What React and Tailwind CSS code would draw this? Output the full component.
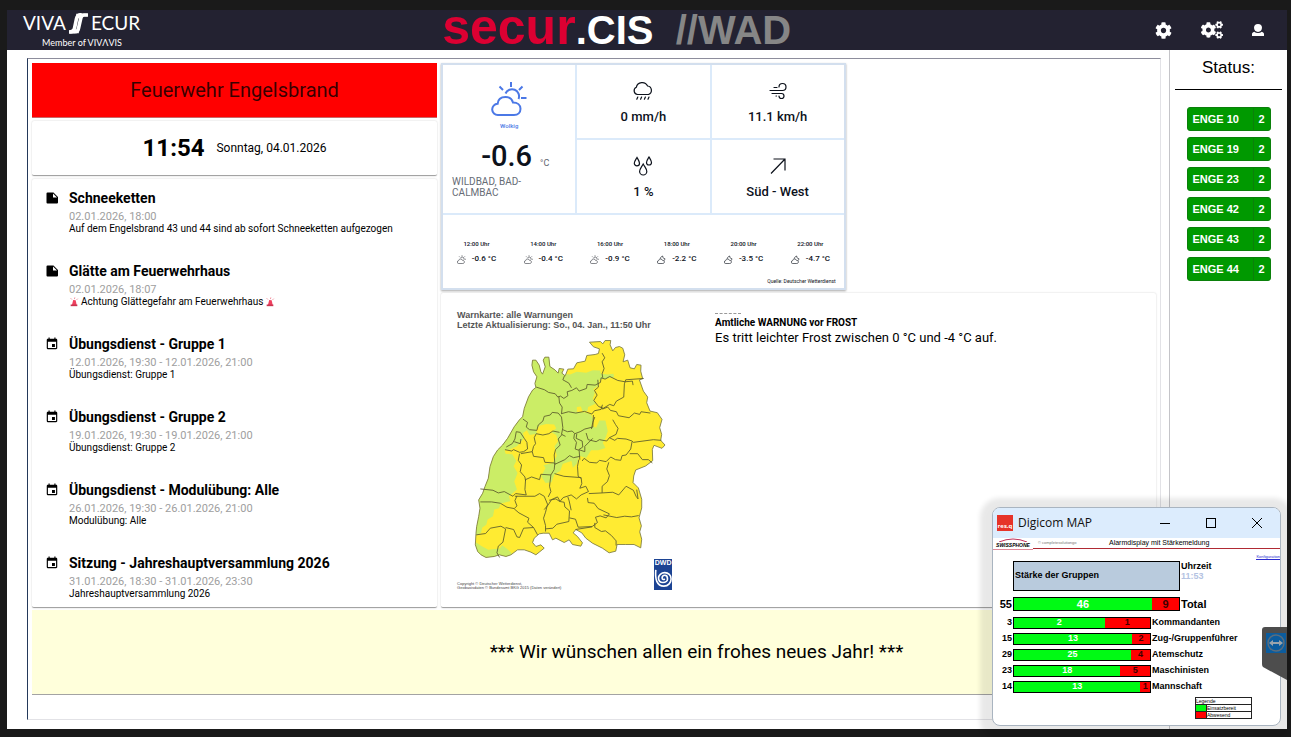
import React from 'react';
import { FaCog, FaCogs } from 'react-icons/fa';
import { MdEvent } from 'react-icons/md';

const NEWS = [
  { type: 'note', title: 'Schneeketten', date: '02.01.2026, 18:00', text: 'Auf dem Engelsbrand 43 und 44 sind ab sofort Schneeketten aufgezogen' },
  { type: 'note', title: 'Glätte am Feuerwehrhaus', date: '02.01.2026, 18:07', text: 'Achtung Glättegefahr am Feuerwehrhaus', alarm: true },
  { type: 'event', title: 'Übungsdienst - Gruppe 1', date: '12.01.2026, 19:30 - 12.01.2026, 21:00', text: 'Übungsdienst: Gruppe 1' },
  { type: 'event', title: 'Übungsdienst - Gruppe 2', date: '19.01.2026, 19:30 - 19.01.2026, 21:00', text: 'Übungsdienst: Gruppe 2' },
  { type: 'event', title: 'Übungsdienst - Modulübung: Alle', date: '26.01.2026, 19:30 - 26.01.2026, 21:00', text: 'Modulübung: Alle' },
  { type: 'event', title: 'Sitzung - Jahreshauptversammlung 2026', date: '31.01.2026, 18:30 - 31.01.2026, 23:30', text: 'Jahreshauptversammlung 2026' },
];

const FORECAST = [
  { time: '12:00 Uhr', temp: '-0.6 °C', day: true },
  { time: '14:00 Uhr', temp: '-0.4 °C', day: true },
  { time: '16:00 Uhr', temp: '-0.9 °C', day: true },
  { time: '18:00 Uhr', temp: '-2.2 °C' },
  { time: '20:00 Uhr', temp: '-3.5 °C' },
  { time: '22:00 Uhr', temp: '-4.7 °C' },
];

const VEHICLES = ['ENGE 10', 'ENGE 19', 'ENGE 23', 'ENGE 42', 'ENGE 43', 'ENGE 44'];

const GROUPS = [
  { label: 'Kommandanten', ready: 2, away: 1 },
  { label: 'Zug-/Gruppenführer', ready: 13, away: 2 },
  { label: 'Atemschutz', ready: 25, away: 4 },
  { label: 'Maschinisten', ready: 18, away: 5 },
  { label: 'Mannschaft', ready: 13, away: 1 },
];

const CARD = 'bg-white border-b border-[#a3a3a3] rounded-[2px] shadow-[0_0_2px_rgba(0,0,0,0.2)]';

/* ---------- icons ---------- */

const SunCloudIcon = ({ className }) => (
  <svg viewBox="0 0 36 36" className={className} fill="none" stroke="currentColor" strokeWidth="2">
    <path d="M7 34a5.5 5.5 0 0 1-.4-11.2C7 18.5 10 16 14.500 16c4 0 6.500 2 7.500 5.500 4.500 0 7.500 2.500 7.500 6.200 0 3.800-2.500 6.300-6.500 6.300z" />
    <path d="M14.500 12.500a7 7 0 0 1 13 5.500M20 1v5M8.500 5.500l3.500 3.500M31.500 5.500 28 9M30 17h5.500" />
  </svg>
);

const MoonCloudIcon = ({ className }) => (
  <svg viewBox="0 0 36 36" className={className} fill="none" stroke="currentColor" strokeWidth="2.5">
    <path d="M7 34a5.5 5.5 0 0 1-.4-11.2C7 18.5 10 16 14.500 16c4 0 6.500 2 7.500 5.500 4.500 0 7.500 2.500 7.500 6.200 0 3.800-2.500 6.300-6.500 6.300z" />
    <path d="M13 15c0-5 4-9 10-11-1 6 2 10 9 11-1 4-2 6-4 8" />
  </svg>
);

const RainIcon = () => (
  <svg viewBox="0 0 20 20" className="size-5" fill="none" stroke="currentColor" strokeWidth="1.2" strokeLinecap="round">
    <path d="M4.500 13.500A3.800 3.800 0 0 1 3.300 6.300 6 6 0 0 1 14.600 5a4.400 4.400 0 0 1 .9 8.500z" />
    <path d="m4.800 16-1 2.200M8.600 16l-1 2.200M12.400 16l-1 2.200M16 16l-1 2.200" />
  </svg>
);

const WindIcon = () => (
  <svg viewBox="0 0 20 20" className="size-5" fill="none" stroke="currentColor" strokeWidth="1.2" strokeLinecap="round">
    <path d="M2 9.500h12.500a3.500 3.500 0 1 0-3.500-3.500M6 6.500h3M4 12.500h9.500a2.500 2.500 0 1 1-2.500 2.500M8 15h.5" />
  </svg>
);

const DropsIcon = () => (
  <svg viewBox="0 0 20 20" className="size-5" fill="none" stroke="currentColor" strokeWidth="1.2">
    <path d="M4 1.500C5.500 4 6.500 5.500 6.500 7.200a2.600 2.600 0 0 1-5.200 0C1.300 5.500 2.500 4 4 1.500zM16 1c1.500 2.500 2.500 4 2.500 5.500a2.500 2.500 0 0 1-5 0C13.500 5 14.500 3.500 16 1zM10.200 8c2 3.500 3.600 5 3.600 7.400a3.600 3.600 0 0 1-7.200 0C6.600 13 8.300 11.500 10.200 8z" />
  </svg>
);

const ArrowIcon = () => (
  <svg viewBox="0 0 20 20" className="size-5" fill="none" stroke="currentColor" strokeWidth="1.2">
    <path d="M3 17.500 17 3M5.500 3H17v11.500" />
  </svg>
);

const AlarmIcon = () => (
  <svg viewBox="0 0 12 12" className="size-[10px]" fill="none">
    <path d="M3.500 9.500 5 3.500l3 .3L9.200 9.500z" fill="#f0405f" />
    <path d="M2 9h8v2H2z" fill="#c93450" />
    <path d="M6.500 2.500 7 .500M3.500 3 2 1.500M9 3.500 10.500 2" stroke="#ef7d8d" />
  </svg>
);

const NoteIcon = () => (
  <svg viewBox="0 0 14 14" className="size-[14px] mt-[3px] shrink-0">
    <path d="M2.500 1.500H8.500L13 6v5.500a1 1 0 0 1-1 1H2.500a1 1 0 0 1-1-1v-9a1 1 0 0 1 1-1zM8 2.500V6.500h4z" fillRule="evenodd" />
  </svg>
);

const UserIcon = () => (
  <svg viewBox="0 0 12 12" className="size-3" fill="currentColor">
    <path d="M6 0c2.600 0 4 1.600 4 3.800S8.500 8 6 8 2 6 2 3.800 3.400 0 6 0z" />
    <path d="M2.200 7.800C3.200 8.600 4.500 9 6 9s2.800-.4 3.800-1.200C11.200 8.200 12 9 12 10.200V12H0v-1.800C0 9 .8 8.200 2.200 7.800z" />
  </svg>
);

/* ---------- header ---------- */

const Header = () => (
  <header className="flex h-10 bg-[#232231] text-white">
    <div className="w-[34%] pl-4 font-[Lato,sans-serif]">
      <div className="w-[118px]">
        <div className="flex items-center h-[26px] text-[19px] leading-6">
          <span>VIVA</span>
          <svg viewBox="0 0 62 64" className="w-[21px] h-[21px] mx-[2px]" fill="none" stroke="#fff">
            <path d="M41 5c-10 0-14 3-16 12l-6 29c-1 8-5 12-17 12" strokeWidth="11" />
            <path d="M60 6H48c-6 0-9 4-10 10l-7 31c-1 6-5 10-12 10H4" strokeWidth="11" />
            <path d="M24 6h34M4 58h28" strokeWidth="8" />
          </svg>
          <span>ECUR</span>
        </div>
        <div className="text-center text-[9px] leading-[14px]">Member of VIVΛVIS</div>
      </div>
    </div>

    <h1 className="font-['Liberation_Sans',sans-serif] font-bold text-[40px] leading-[34px] whitespace-pre">
      <span className="text-[50px] text-[#dc0032]">secur</span>
      <span>.CIS</span>
      <span className="text-[#868686]">{'  //WAD'}</span>
    </h1>

    <nav className="flex items-center justify-end flex-1 gap-[29px] pr-[23px]">
      <button aria-label="Einstellungen"><FaCog className="size-[17px]" /></button>
      <button aria-label="System"><FaCogs className="w-[22px] h-[18px]" /></button>
      <button aria-label="Benutzer"><UserIcon /></button>
    </nav>
  </header>
);

/* ---------- left column ---------- */

const NewsItem = ({ item }) => (
  <li className="flex gap-[10px]">
    {item.type === 'note' ? <NoteIcon /> : <MdEvent className="size-[14px] mt-[3px] shrink-0" />}
    <div>
      <h2 className="text-[14px] leading-5 font-bold">{item.title}</h2>
      <p className="text-[11px] leading-3 mt-[3px] text-[#9e9e9e]">{item.date}</p>
      <p className="flex items-center gap-[2px] text-[10px] leading-3">
        {item.alarm && <AlarmIcon />}
        {item.text}
        {item.alarm && <AlarmIcon />}
      </p>
    </div>
  </li>
);

const LeftColumn = () => (
  <div className="flex flex-col gap-[3px]">
    <div className="flex items-center justify-center h-[55px] bg-[#ff0000] border-b border-[#c86a6a] text-xl text-black/80">
      Feuerwehr Engelsbrand
    </div>
    <div className={`${CARD} flex items-center justify-center gap-3 h-[55px]`}>
      <span className="text-2xl font-bold">11:54</span>
      <span className="text-xs">Sonntag, 04.01.2026</span>
    </div>
    <ul className={`${CARD} flex flex-col gap-[26px] pl-[13px] pt-[9px] pb-[7px]`}>
      {NEWS.map(item => <NewsItem key={item.title} item={item} />)}
    </ul>
  </div>
);

/* ---------- weather ---------- */

const WeatherCell = ({ icon, value }) => (
  <div className="flex flex-col items-center justify-center gap-[6px] pt-1 bg-white text-[13px] leading-5 font-medium">
    {icon}
    <span>{value}</span>
  </div>
);

const Weather = () => (
  <section className="w-[56.6%] border-2 border-[#d3dfee] bg-[#dbeafa] shadow-[0_1px_2px_rgba(0,0,0,0.35)] text-[#0c111b]">
    <div className="grid grid-cols-3 grid-rows-2 gap-[2px] h-[148px]">
      <div className="row-span-2 bg-white px-[9px] pt-4">
        <div className="flex flex-col items-center text-[#4b78e6]">
          <SunCloudIcon className="size-9" />
          <span className="text-[6px] leading-[8px] mt-[5px] font-medium">Wolkig</span>
        </div>
        <div className="flex items-baseline justify-center gap-2 pl-3 mt-[10px]">
          <span className="text-[29px] leading-8 font-medium">-0.6</span>
          <span className="text-[9px] text-[#5f6670]">°C</span>
        </div>
        <p className="text-[10px] leading-[11px] mt-1 text-[#666c75]">WILDBAD, BAD-CALMBAC</p>
      </div>
      <WeatherCell icon={<RainIcon />} value="0 mm/h" />
      <WeatherCell icon={<WindIcon />} value="11.1 km/h" />
      <WeatherCell icon={<DropsIcon />} value="1 %" />
      <WeatherCell icon={<ArrowIcon />} value="Süd - West" />
    </div>
    <div className="mt-[2px] bg-white pt-6 h-[73px]">
      <div className="grid grid-cols-6 font-medium">
        {FORECAST.map(f => (
          <div key={f.time} className="flex flex-col items-center">
            <span className="text-[6px] leading-[10px]">{f.time}</span>
            <span className="flex items-center gap-[6px] text-[8px] leading-[10px] mt-[5px]">
              {f.day ? <SunCloudIcon className="size-[9px]" /> : <MoonCloudIcon className="size-[9px]" />}
              {f.temp}
            </span>
          </div>
        ))}
      </div>
      <p className="text-right text-[5px] leading-[6px] mt-[14px] pr-2">Quelle: Deutscher Wetterdienst</p>
    </div>
  </section>
);

const OUTLINE =
  'M450 127l33-2 7 7 7-10 17 0-2 13 8 18 8-10 12-3 10 5 6 20-5 21 14-5 7 23 13 3 7-13 13 2-1 18 6 23-10 3 12 34 13 18-3 17 10 25 22 5 14 20-7 25 6 20-3 18 13 14-9 10-24-9-5 12 1 34-21 16-30 12-6 18-2 20 16 16 10 34 0 26-8 30 7 24-5 18 6 22-3 26-20-10-25 0-26 0-4 20-20 5-20-14-30-15-20-15-12-16-18-10-8 10 13 11 15 19-5 10-25-5-10-14-15 8-25-13-10 5-10-20-18 0-12 2-15 13-5 13 10 12 15-5 10 10-15 12-10 8-15-8-20-7-20 0-20 15-15 5-20-5-15 5-25 3-15-8-10-10-7-20 2-35 2-20 6-30 4-25-4-25 12-20 7-20 10-25 5-35 10-30 13-20 15-15 15-20 20-35 15-20 10-10 5-25 13-35 12-20 10-8-3-12 6-20-10-15-5-20 2-15 10 0 10 15 5 20 5 7 8-22-6-20 5-9 12 0 3 28 15 10 10 10 3-14 14 2-6 12 10 8 8-20 17-1 10-18 25-5 5-17 25-3 10-3 3-14-18-6z';

const GREEN =
  'M270 160H340L372 222 392 224 412 216 440 219 460 211 482 212 484 222 505 224 522 222 524 232 500 236 480 240 478 258 462 268 466 280 460 296 468 312 446 322 444 334 430 336 424 320 412 322 412 336 440 338 455 345 462 360 456 378 470 384 480 362 498 362 505 395 498 415 490 430 498 445 476 452 455 452 440 475 420 468 412 492 400 504 396 484 370 492 362 514 345 524 336 548 318 550 305 530 318 505 312 497 340 490 352 468 345 440 356 425 350 406 336 398 350 386 344 374 320 373 300 378 290 390 292 402 270 406 262 392 250 400 254 415 232 440 208 450 195 452 198 462 218 464 230 484 222 500 234 520 224 546 232 570 208 590 212 605 184 612 178 626 164 630 160 650 144 660 140 676 128 684 124 700 100 712V400z';

const BORDERS = [
  'M290 262l25 8 12 8 20 4 8 10 8-3 10 7 12-8-2-12 14-4 14-8 8 10 22-8 2-12 24 2 16-8 2-14 12 4 14-8 24 12 22 4 22-2 2 12',
  'M375 228l-5 12 18 10 8 14M488 160l8 14-8 12 6 20-6 16 2 12M475 240l2 22-12 10 8 14-10 16 14 18 14 6 20-12 12 4 8-14 22-12 2-40 4-12 54-4M358 290l2 20 8 12-2 20M365 342l22-6 22 4 26-5 22 8 8-10 20-4 4-14M485 320l4 8 16-6 8 10 18 4 6 12 32 6 16-14 16 4 4-8 28 4',
  'M250 358l14 10-4 14 10 8 22 2 4-16 14-12 4-14 18-4 6-8 18 2 10 12 4 32-4 20 12 6M370 390l14 6 14-2 8 8 16-6 14-8 24-6 2-36M456 388l4-20 6-16M520 360l8 14 8 12-6 18-20 10-8 10-22-4-10 6-24-6-6-20M510 414l16 8 8-6 26 2 18 6 4 4 60-8 24 2',
  'M578 426l-4 22-14 18-12 2-4 14-16-2-14-8-14 14-20-4-8 8-22-2-16-12-6 8M571 462l24 0 14 18 18 0 12 10',
  'M405 402l-2 14 8 12-4 20 12 4 2 28M412 402l-2 14 18 8 2 18-12 8 18 6 0-16 24-24M368 404l-12 14 6 18-14 14-4 16 2 28 30-14 14-12 12 6 20-4M200 442l18-10 8-14 4-22 12 2 12 18 8 12 2 20-12 8-12 2-18-8-6 4-20-4M224 426l18 6 2-14M244 462l34-6 4-16 6-8-4-18 6-12 20 4 18-4 12-8 20 4M278 456l4 14 30 4 4 14 28 2M240 462l-4 20 10 14-4 20 14 16 2 12',
  'M346 490l-2 20-10 16-30-2-4 16-24-8-18 8-2 30 4 16-32-4-8 8-26-14-18 4-16-8-38-4M334 526l-4 34 4 16-8 16M345 522l28 8 52 4 2 18-6 14 18-6 8 16-22 10-14 12-16-12-24 8-10 12-12-8-20 4M418 480l-4 20 2 30 8 6M508 488l-6 20 8 20-6 18-16 14 0 20-40 2M488 580l32-2 18 8 22-26 22 12 8 18 6 8-4-28',
  'M122 607l34 0 26 4 20 12 22 4 8-8-6-16 6-14M224 628l14 12 30 16-4 12 18 16M226 590l60 0 14-8 14 8 10 24-6 24-6 18 6 22 0 18M314 630l12-14 10-16 18-8 8 14 12 2 2 14 14 12-2 32-36 8-12 12-22 2M385 592l4 12 6 28M390 655l18 4 8 24 42-2 16-12-6-16 14-4 18 6 10-12-34-16-12-16-18-2-2-14M492 646l40 8 24-4 20 2 22-4M466 670l0 14 20 12 12-2 18 14 14 16 0 14M408 690l50-8',
  'M110 706l28-4 14-16 32-6 14 8-8 40-14 12-4 20 8 14M198 684l24 6 10 22 8 2 12-28 30-2 12 22',
];

const WarnMap = () => (
  <svg viewBox="100 118 580 660" className="w-[193px] h-[220px] ml-4 mt-[9px]" role="img" aria-label="Warnkarte">
    <clipPath id="land"><path d={OUTLINE} /></clipPath>
    <path d={OUTLINE} fill="#ffeb32" />
    <g clipPath="url(#land)" fill="#cbed66">
      <path d={GREEN} />
      <path d="M104 725l20 14 22 12 34-4 8-10 16 12 12 12-4 14H104z" />
    </g>
    <path d={OUTLINE} fill="none" stroke="#77763f" strokeWidth="2.5" />
    {BORDERS.map(d => <path key={d} d={d} fill="none" stroke="#5c5b2c" strokeWidth="2.6" strokeLinejoin="round" />)}
  </svg>
);

const Warnings = () => (
  <section className={`${CARD} flex items-start flex-1 pl-4 pt-[17px]`}>
    <div className="w-[215px] font-['Liberation_Sans',sans-serif]">
      <h2 className="text-[9px] leading-[10px] font-bold text-[#555] whitespace-nowrap">
        Warnkarte: alle Warnungen<br />Letzte Aktualisierung: So., 04. Jan., 11:50 Uhr
      </h2>
      <WarnMap />
      <div className="flex items-end justify-between">
        <p className="text-[4px] leading-1 text-[#444] whitespace-nowrap">
          Copyright © Deutscher Wetterdienst,<br />Geobasisdaten © Bundesamt BKG 2015 (Daten verändert)
        </p>
        <div className="flex flex-col items-center w-[18px] h-[31px] bg-[#1c4393] text-white">
          <span className="text-[7px] leading-2 font-bold">DWD</span>
          <svg viewBox="0 0 20 24" className="w-[18px] h-[22px]" fill="none" stroke="#fff" strokeWidth="1.8">
            <path d="M2 3c-1 10 1 18 9 18 5 0 8-4 8-8s-3-7-7-7-7 3-7 6 2 5 5 5 5-2 5-4-1-4-3-4-3 1-3 3 2 2 3 1" />
          </svg>
        </div>
      </div>
    </div>
    <div className="ml-[43px] pt-[3px]">
      <div className="w-[26px] border-t border-dashed border-[#999]" />
      <h3 className="text-[10px] leading-3 mt-[3px] font-bold">Amtliche WARNUNG vor FROST</h3>
      <p className="text-[13px] leading-[18px]">Es tritt leichter Frost zwischen 0 °C und -4 °C auf.</p>
    </div>
  </section>
);

/* ---------- status sidebar ---------- */

const StatusSidebar = () => (
  <aside className="w-[118px] shrink-0 border-l border-[#c4c4c8] px-[5px] font-['Liberation_Sans',sans-serif]">
    <h2 className="h-10 pt-2 text-center text-[17px] leading-5 border-b border-black">Status:</h2>
    <div className="flex flex-col items-center gap-[6px] pt-[17px]">
      {VEHICLES.map(name => (
        <button key={name} className="flex w-[84px] h-6 rounded-[3px] border border-[#0b800b] bg-[#009900] text-white text-[11px] font-bold">
          <span className="flex-1 self-center text-left pl-[5px]">{name}</span>
          <span className="flex items-center justify-center w-[17px] h-full border-l border-[#0b800b]">2</span>
        </button>
      ))}
    </div>
  </aside>
);

/* ---------- floating Digicom window ---------- */

const StrengthBar = ({ label, ready, away, total }) => (
  <div className={total ? 'flex items-center text-[11px] h-[14px] mb-[6px]' : 'flex items-center text-[9px] h-3 mb-1'}>
    <span className="w-5 pr-[1px] text-right shrink-0">{ready + away}</span>
    <div className={total ? 'flex w-[167px] h-full border border-black' : 'flex w-[138px] h-full border border-black'}>
      <span
        className="flex items-center justify-center bg-[#00fa14] text-white"
        style={{ width: `${(ready / (ready + away)) * 100}%` }}
      >
        {ready}
      </span>
      <span className="flex flex-1 items-center justify-center bg-[#ff0000] text-[#3c0000]">{away}</span>
    </div>
    <span className="pl-[1px] whitespace-nowrap">{label}</span>
  </div>
);

const DigicomWindow = () => (
  <div className="absolute right-[10px] bottom-[11px] w-[289px] h-[219px] flex flex-col rounded-lg overflow-hidden bg-white border border-[#a9b4c0] shadow-[0_3px_5px_12px_rgba(0,0,0,0.09)] font-['Liberation_Sans',sans-serif]">
    <div className="flex items-center h-[30px] shrink-0 bg-[#dcecfd] pl-1 font-['Open_Sans',sans-serif]">
      <span className="flex items-end justify-center w-4 h-4 bg-[#e63329] text-white text-[6px] leading-[10px] font-bold">res.q</span>
      <span className="pl-[5px] text-xs text-[#111]">Digicom MAP</span>
      <div className="flex ml-auto">
        <button aria-label="Minimieren" className="flex items-center justify-center w-[46px]"><span className="w-[10px] h-px bg-black" /></button>
        <button aria-label="Maximieren" className="flex items-center justify-center w-[46px]"><span className="size-[10px] border border-black" /></button>
        <button aria-label="Schließen" className="flex items-center justify-center w-[46px]">
          <svg viewBox="0 0 10 10" className="size-[10px]" stroke="#000"><path d="m0 0 10 10M10 0 0 10" /></svg>
        </button>
      </div>
    </div>

    <div className="flex h-3 shrink-0">
      <div className="flex flex-col items-center w-10 border-b border-[#e08a9a]">
        <svg viewBox="0 0 30 4" className="w-[30px] h-1 shrink-0" fill="none" stroke="#c0305a"><path d="M1 4Q15-2 29 4" /></svg>
        <span className="text-[5px] leading-[6px] font-bold italic">SWISSPHONE</span>
      </div>
      <div className="flex items-center flex-1 h-[11px] border-b border-[#b02a34] text-[7px] whitespace-nowrap">
        <span className="w-[76px] pl-[5px] text-[4px] text-[#777]">© completesolutiongo</span>
        <span>Alarmdisplay mit Stärkemeldung</span>
      </div>
    </div>
    <a href="#" className="self-end text-[4px] leading-[5px] mt-1 text-[#2a2ad0] border-b border-[#2a2ad0]">Konfiguration</a>

    <div className="flex flex-col font-bold text-black">
      <div className="flex pl-5 mt-[1px] mb-[6px]">
        <h2 className="flex items-center w-[167px] h-[30px] pl-[1px] border border-black bg-[#b9cbdd] text-[9px]">Stärke der Gruppen</h2>
        <div className="pl-[1px] text-[9px] leading-[10px]">
          <div>Uhrzeit</div>
          <div className="text-[#b4c3e2]">11:53</div>
        </div>
      </div>
      <StrengthBar label="Total" ready={46} away={9} total />
      {GROUPS.map(g => <StrengthBar key={g.label} {...g} />)}
    </div>

    <table className="w-[57px] self-end mr-7 border border-[#222] text-[5px] leading-[6px]">
      <tbody>
        <tr><th colSpan={2} className="border border-[#222] font-normal text-left">Legende</th></tr>
        <tr><td className="w-[11px] border border-[#222] bg-[#00fa14]" /><td className="border border-[#222]">Einsatzbereit</td></tr>
        <tr><td className="w-[11px] border border-[#222] bg-[#ff0000]" /><td className="border border-[#222]">Abwesend</td></tr>
      </tbody>
    </table>
  </div>
);

const TeamViewerTab = () => (
  <button aria-label="TeamViewer" className="absolute right-[4px] bottom-[57px] w-[25px] h-[53px]">
    <svg viewBox="0 0 25 53" className="w-full h-full">
      <path d="M3 0H25V53L1 40Q0 39 0 37V3Q0 0 3 0Z" fill="#4d4d4d" />
      <path d="M4 6h20v20H4z" fill="#0b5c9e" />
      <circle cx="14" cy="16" r="8" fill="none" stroke="#5b6d7c" strokeWidth="1.5" />
      <path d="m7 16 4-3v2h6v-2l4 3-4 3v-2h-6v2z" fill="#9aa4ac" />
    </svg>
  </button>
);

export default function App() {
  return (
    <div className="relative flex flex-col min-h-screen bg-[#1a1a1a] pt-[10px] pl-[7px] pr-1 pb-2 font-[Roboto,sans-serif] text-black">
      <Header />
      <main className="flex flex-1 bg-white">
        <div className="flex flex-col flex-1 mt-2 ml-5 mr-2 mb-[9px] p-1 border border-l-[#24395a] border-t-[#8d8d9c] border-r-[#e2e2e6] border-b-[#e2e2e6]">
          <div className="grid grid-cols-[17fr_30fr] gap-1">
            <LeftColumn />
            <div className="flex flex-col gap-[3px]">
              <Weather />
              <Warnings />
            </div>
          </div>
          <div className="flex items-center justify-center h-[85px] mt-[2px] pl-[205px] bg-[#ffffdb] border-b border-[#a3a3a3] text-[19px]">
            *** Wir wünschen allen ein frohes neues Jahr! ***
          </div>
        </div>
        <StatusSidebar />
      </main>
      <DigicomWindow />
      <TeamViewerTab />
    </div>
  );
}
